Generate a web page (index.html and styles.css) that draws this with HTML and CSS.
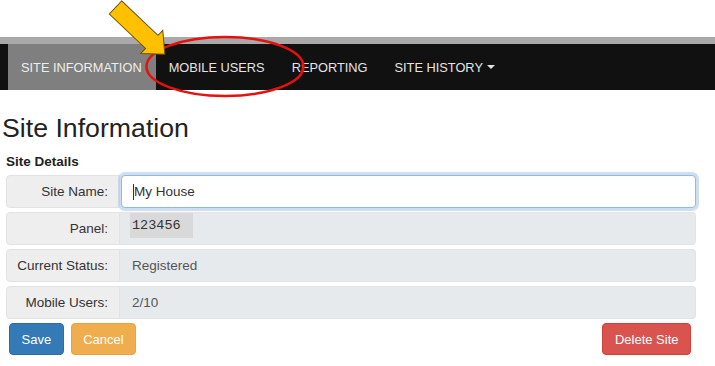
FILE: index.html
```html
<!DOCTYPE html>
<html lang="en">
<head>
  <meta charset="UTF-8" />
  <meta name="viewport" content="width=device-width, initial-scale=1.0" />
  <title>Site Information</title>
  <link rel="stylesheet" href="styles.css">
</head>
<body>
  <div class="top-space"></div>

  <nav class="navbar">
    <ul class="nav-links">
      <li class="active"><a href="#">Site Information</a></li>
      <li><a href="#">Mobile Users</a></li>
      <li><a href="#">Reporting</a></li>
      <li><a href="#">Site History <span class="caret"></span></a></li>
    </ul>
  </nav>

  <!-- callout drawn over the navbar -->
  <svg class="callout" width="715" height="110" viewBox="0 0 715 110">
    <ellipse cx="225" cy="66.5" rx="78.5" ry="29.5" fill="none" stroke="#e8100f" stroke-width="2.5"></ellipse>
    <polygon transform="translate(115.5 7.5) rotate(43.5)"
      points="0,-9 50,-9 50,-16 68,0 50,16 50,9 0,9"
      fill="#ffc000" stroke="#6b5200" stroke-width="1"></polygon>
  </svg>

  <main class="content">
    <h1>Site Information</h1>
    <h4 class="section-title">Site Details</h4>

    <div class="form-row">
      <div class="row-label">Site Name:</div>
      <div class="row-value editable"><span class="caret-line"></span>My House</div>
    </div>
    <div class="form-row">
      <div class="row-label">Panel:</div>
      <div class="row-value"><span class="panel-code">123456</span></div>
    </div>
    <div class="form-row">
      <div class="row-label">Current Status:</div>
      <div class="row-value">Registered</div>
    </div>
    <div class="form-row">
      <div class="row-label">Mobile Users:</div>
      <div class="row-value">2/10</div>
    </div>

    <div class="actions">
      <button class="btn btn-primary">Save</button>
      <button class="btn btn-warning">Cancel</button>
      <button class="btn btn-danger push-right">Delete Site</button>
    </div>
  </main>
</body>
</html>
```

FILE: styles.css
```css
* {
  box-sizing: border-box;
}

body {
  margin: 0;
  background-color: #ffffff;
  color: #333;
  font-family: "Liberation Sans", Arial, sans-serif;
  position: relative;
}

.top-space {
  height: 37px;
}

.navbar {
  background-color: #111;
  border-top: 7px solid #a9a9a9;
  height: 53px;
}

.nav-links {
  list-style: none;
  margin: 0;
  padding: 0 0 0 8px;
  display: flex;
  height: 100%;
}

.nav-links li a {
  display: flex;
  align-items: center;
  height: 100%;
  padding: 0 14px 0 13px;
  color: #e4e4e4;
  text-decoration: none;
  text-transform: uppercase;
  font-size: 12.8px;
}

.nav-links li.active a {
  background-color: #7f7f7f;
  color: #eee;
}

.caret {
  display: inline-block;
  margin-left: 4px;
  border-top: 4px solid #e4e4e4;
  border-left: 4px solid transparent;
  border-right: 4px solid transparent;
}

.callout {
  position: absolute;
  top: 0;
  left: 0;
  pointer-events: none;
}

.content {
  padding: 0 19px 0 6px;
}

h1 {
  margin: 23px 0 0 -4px;
  font-size: 26.7px;
  font-weight: normal;
  line-height: 31px;
  color: #222;
}

.section-title {
  margin: 9px 0 5px 0;
  font-size: 13.5px;
  font-weight: bold;
  line-height: 17px;
  color: #222;
}

.form-row {
  display: flex;
  height: 33px;
  margin-bottom: 4px;
  font-size: 13.5px;
}

.row-label {
  width: 114px;
  flex-shrink: 0;
  display: flex;
  align-items: center;
  justify-content: flex-end;
  padding-right: 11px;
  background-color: #eee;
  border: 1px solid #e2e2e2;
  border-radius: 4px 0 0 4px;
  color: #333;
}

.row-value {
  flex: 1;
  display: flex;
  align-items: center;
  padding-left: 12px;
  background-color: #e7eaed;
  border: 1px solid #e2e5e8;
  border-left: none;
  border-radius: 0 4px 4px 0;
  color: #555;
}

.row-value.editable {
  margin-left: 1px;
  background-color: #fff;
  border: 1px solid #93b9de;
  border-radius: 4px;
  box-shadow: 0 0 1px 3px rgba(170, 200, 230, 0.6);
  color: #333;
  padding-left: 11px;
}

.caret-line {
  width: 1px;
  height: 16px;
  background-color: #333;
}

.panel-code {
  align-self: flex-start;
  margin-left: -2px;
  padding: 0 12px 0 2px;
  height: 25px;
  display: flex;
  align-items: center;
  background-color: #d9d9d9;
  font-family: "Liberation Mono", "DejaVu Sans Mono", monospace;
  font-size: 13.5px;
  color: #333;
}

.actions {
  display: flex;
  gap: 7px;
  margin-top: 4px;
  padding: 0 5px 0 3px;
}

.btn {
  height: 32px;
  padding: 0 11.5px;
  border: 1px solid transparent;
  border-radius: 4px;
  font-family: "Liberation Sans", Arial, sans-serif;
  font-size: 13px;
  color: #fff;
  cursor: pointer;
}

.btn-primary {
  background-color: #337ab7;
  border-color: #2e6da4;
}

.btn-warning {
  background-color: #f0ad4e;
  border-color: #eea236;
}

.btn-danger {
  background-color: #d9534f;
  border-color: #d43f3a;
}

.push-right {
  margin-left: auto;
}
```
